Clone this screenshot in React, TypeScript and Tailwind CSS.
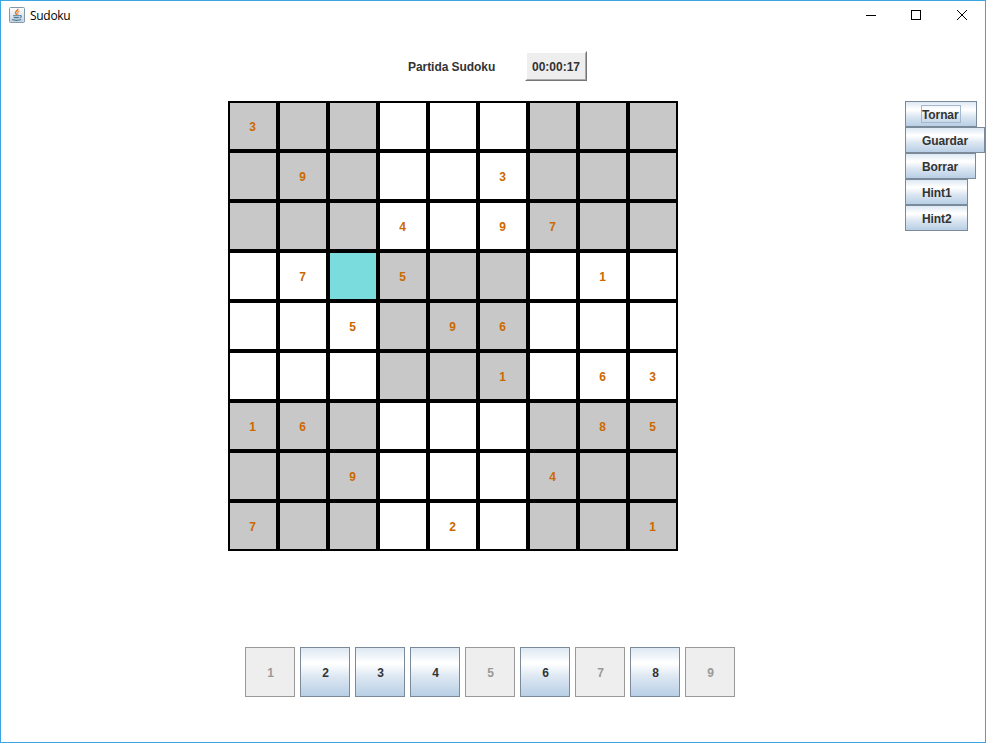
const board: string[] = [
  '3........',
  '.9...3...',
  '...4.97..',
  '.7.5...1.',
  '..5.96...',
  '.....1.63',
  '16.....85',
  '..9...4..',
  '7...2...1',
]

const selected = { row: 3, col: 2 }

const actions = [
  { label: 'Tornar', width: 'w-[72px]', focused: true },
  { label: 'Guardar', width: 'w-[80px]', focused: false },
  { label: 'Borrar', width: 'w-[71px]', focused: false },
  { label: 'Hint1', width: 'w-[63px]', focused: false },
  { label: 'Hint2', width: 'w-[63px]', focused: false },
]

const digits = [1, 2, 3, 4, 5, 6, 7, 8, 9]
const finished = [1, 5, 7, 9]

const metal =
  'border border-[#7a8a99] bg-[linear-gradient(180deg,#dde8f3_0%,#ffffff_30%,#ffffff_33%,#dce7f2_60%,#b8cfe5_100%)] text-[#333333]'

function JavaIcon() {
  return (
    <svg width="16" height="16" viewBox="0 0 16 16" className="shrink-0">
      <defs>
        <linearGradient id="frame" x1="0" y1="0" x2="0" y2="1">
          <stop offset="0" stopColor="#ffffff" />
          <stop offset="1" stopColor="#c3d2dd" />
        </linearGradient>
      </defs>
      <rect x="0.5" y="0.5" width="15" height="15" rx="1" fill="url(#frame)" stroke="#8398a9" />
      <path d="M8.8 1.8c.7 1.6-2.8 2.5-2.3 4.1.2.8 1 1.2 1 2.1" fill="none" stroke="#e5782b" strokeWidth="1.5" />
      <path d="M10.5 4.2c-1.8.7-2.3 1.4-1.7 2.2.4.6.2 1-.3 1.5" fill="none" stroke="#ee9654" strokeWidth="1.1" />
      <path
        d="M4 8.8h6.4M4.8 10.6h5M10.6 8.6c2.3-.4 2.2 1.8-.1 2.4M3 12.6c2 1 7 1 9.3 0"
        fill="none"
        stroke="#4a7698"
        strokeWidth="1.1"
      />
    </svg>
  )
}

function TitleBar() {
  return (
    <header className="flex h-7 items-center pl-2">
      <JavaIcon />
      <span className="ml-[5px] pt-px font-['Open_Sans',sans-serif] text-[12px] leading-4 tracking-[-0.3px] text-black">
        Sudoku
      </span>
      <div className="ml-auto flex h-full">
        {['M5 5.5h10', 'M4.5 .5h9v9h-9z', 'M4 0l10 10M14 0L4 10'].map((d, i) => (
          <button key={d} className="flex w-[46px] items-start justify-center pt-[9px] last:w-[45px]">
            <svg
              width="20"
              height="10"
              viewBox="0 0 20 10"
              fill="none"
              stroke="black"
              shapeRendering={i === 2 ? 'auto' : 'crispEdges'}
            >
              <path d={d} />
            </svg>
          </button>
        ))}
      </div>
    </header>
  )
}

function Board() {
  return (
    <div className="grid grid-cols-[repeat(9,50px)] grid-rows-[repeat(9,50px)]">
      {board.flatMap((line, row) =>
        line.split('').map((value, col) => {
          const shaded = (Math.floor(row / 3) + Math.floor(col / 3)) % 2 === 0
          const active = row === selected.row && col === selected.col
          const fill = active ? 'bg-[#7adcdc]' : shaded ? 'bg-[#c8c8c8]' : 'bg-white'
          return (
            <div
              key={`${row}-${col}`}
              className={`flex items-center justify-center border-2 border-black pr-px pt-[3px] text-[#cc6800] ${fill}`}
            >
              {value === '.' ? '' : value}
            </div>
          )
        }),
      )}
    </div>
  )
}

export default function App() {
  return (
    <div className="flex h-[743px] w-[986px] flex-col overflow-hidden border border-[#3ca5e4] bg-white font-['Liberation_Sans',Arial,sans-serif] text-[12px] leading-[15px] font-bold text-[#333333]">
      <div className="font-normal">
        <TitleBar />
      </div>
      <div className="mt-[22px] flex h-[30px] items-center pl-[407px]">
        <span className="w-[117px] whitespace-nowrap pt-[3px] tracking-[-0.06px]">Partida Sudoku</span>
        <div className="h-[30px] w-[62px] border border-t-white border-r-[#767676] border-b-[#767676] border-l-white">
          <div className="flex h-full items-center justify-center border border-t-white border-r-[#a9a9a9] border-b-[#a9a9a9] border-l-white bg-[#eeeeee] pt-[3px]">
            00:00:17
          </div>
        </div>
      </div>
      <main className="mt-5 flex pl-[227px]">
        <Board />
        <aside className="ml-[227px] flex w-[80px] flex-col items-start">
          {actions.map(({ label, width, focused }) => (
            <button key={label} className={`flex h-[26px] items-center pl-[15px] ${width} ${metal}`}>
              <span
                className={`border pt-[3px] text-left leading-[13px] tracking-[-0.1px] ${
                  focused ? 'w-10 border-[#a3b8cc]' : 'border-transparent'
                }`}
              >
                {label}
              </span>
            </button>
          ))}
        </aside>
      </main>
      <div className="mt-24 flex gap-[5px] pl-[244px]">
        {digits.map((digit) => (
          <button
            key={digit}
            className={`flex size-[50px] items-center justify-center pt-[3px] pl-px ${
              finished.includes(digit) ? 'border border-[#999999] bg-[#eeeeee] text-[#999999]' : metal
            }`}
          >
            {digit}
          </button>
        ))}
      </div>
    </div>
  )
}
